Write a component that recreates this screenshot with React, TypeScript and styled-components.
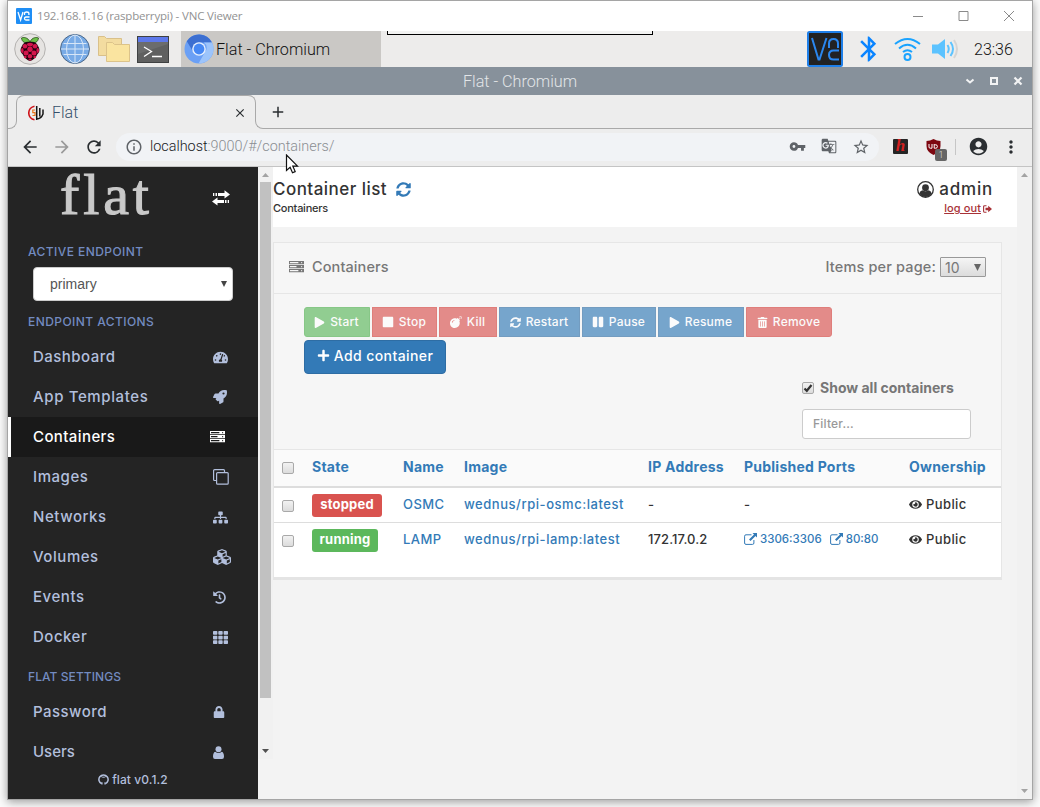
import React from "react";
import styled, { createGlobalStyle, css } from "styled-components";
import {
  FaTachometerAlt, FaRocket, FaSitemap, FaCubes, FaHistory, FaTh, FaLock,
  FaSyncAlt, FaPlay, FaStop, FaBomb, FaPause, FaTrashAlt, FaPlus, FaEye,
} from "react-icons/fa";
import {
  MdArrowBack, MdArrowForward, MdRefresh, MdClose, MdAdd, MdInfoOutline, MdVpnKey,
  MdGTranslate, MdStarBorder, MdAccountCircle, MdMoreVert, MdBluetooth,
} from "react-icons/md";

const sans = `Inter, "Liberation Sans", sans-serif`;
const roboto = `Roboto, "Liberation Sans", sans-serif`;

const GlobalStyle = createGlobalStyle`
  * { box-sizing: border-box; }
  body { margin: 0; background: #fff; overflow: hidden; }
  svg { display: block; flex: none; }
`;

/* ---------- outer window ---------- */

const Stage = styled.div`
  height: 807px;
  padding: 0 7px;
  background: #fbfbfb;
  overflow: hidden;
`;
const Window = styled.div`
  position: relative;
  width: 1026px;
  height: 800px;
  display: flex;
  flex-direction: column;
  border: 1px solid #a5a5a5;
  background: #ededed;
  box-shadow: 0 2px 9px rgba(0, 0, 0, 0.38);
`;
const ViewerBar = styled.div`
  height: 30px;
  flex: none;
  display: flex;
  align-items: center;
  padding-left: 8px;
  background: #fff;
`;
const ViewerTitle = styled.div`
  margin-left: 5px;
  flex: 1;
  font: 11.5px/30px "Open Sans", "Noto Sans", sans-serif;
  letter-spacing: -0.17px;
  color: #929292;
`;
const ViewerButtons = styled.div`
  display: flex;
  gap: 33.5px;
  margin-right: 17px;
`;

/* ---------- desktop panel ---------- */

const Panel = styled.div`
  height: 36px;
  flex: none;
  display: flex;
  align-items: center;
  padding-left: 6px;
  background: #edeceb;
`;
const Launchers = styled.div`
  display: flex;
  align-items: center;
  width: 167px;
`;
const TaskButton = styled.div`
  display: flex;
  align-items: center;
  width: 200px;
  height: 36px;
  padding-left: 3px;
  gap: 2px;
  background: #cac8c5;
  font: 300 16.2px/36px ${roboto};
  color: #111;
  span { padding-top: 1px; }
`;
const HiddenToolbar = styled.div`
  align-self: flex-start;
  width: 266px;
  height: 4px;
  margin-left: 6px;
  border: 1px solid #000;
  border-top: 0;
  background: #f3f3f2;
`;
const Tray = styled.div`
  display: flex;
  align-items: center;
  margin-left: auto;
  padding-right: 18px;
`;
const Clock = styled.div`
  width: 40px;
  margin-left: 15px;
  padding-top: 1px;
  font: 300 16px/35px ${roboto};
  color: #111;
`;
const FrameTitle = styled.div`
  height: 28px;
  flex: none;
  display: grid;
  grid-template-columns: 1fr auto 1fr;
  align-items: center;
  background: #87919b;
  font: 300 16.2px/27px ${roboto};
  color: #e2e5e8;
`;
const FrameButtons = styled.div`
  grid-column: 3;
  justify-self: end;
  display: flex;
  margin-right: 9px;
  gap: 14px;
`;
const FrameText = styled.div`
  grid-column: 2;
`;

/* ---------- browser chrome ---------- */

const TabStrip = styled.div`
  height: 34px;
  flex: none;
  display: flex;
  color: #2a2e31;
`;
const TabLead = styled.div`
  width: 9px;
  border-bottom: 1px solid #a9a9a9;
  border-right: 1px solid #a9a9a9;
  border-bottom-right-radius: 8px;
  margin-top: 8px;
`;
const Tab = styled.div`
  width: 240px;
  display: flex;
  align-items: center;
  padding: 0 9px 0 11px;
  border-top: 1px solid #a9a9a9;
  border-radius: 8px 8px 0 0;
  position: relative;
  margin-left: -1px;
  border-left: 1px solid transparent;
  &::before, &::after {
    content: "";
    position: absolute;
    top: -1px;
    width: 9px;
    height: 26px;
  }
  &::before { left: -1px; border-left: 1px solid #a9a9a9; border-top-left-radius: 8px; }
  &::after { right: 0; border-right: 1px solid #a9a9a9; border-top-right-radius: 8px; }
`;
const TabName = styled.div`
  flex: 1;
  margin-left: 8px;
  font: 300 16px/32px ${roboto};
  color: #35506b;
`;
const TabRest = styled.div`
  flex: 1;
  margin-left: -1px;
  margin-top: 8px;
  padding: 0 0 0 13px;
  border-bottom: 1px solid #a9a9a9;
  border-left: 1px solid #a9a9a9;
  border-bottom-left-radius: 8px;
`;
const Toolbar = styled.div`
  height: 38px;
  flex: none;
  display: flex;
  align-items: center;
  padding: 0 12px 2px;
  border-bottom: 1px solid #c4c4c4;
  color: #2a2e31;
`;
const NavButtons = styled.div`
  display: flex;
  gap: 12px;
  width: 96px;
  flex: none;
`;
const Omnibox = styled.div`
  width: 763px;
  flex: none;
  height: 28px;
  display: flex;
  align-items: center;
  padding: 0 9px;
  border-radius: 14px;
  background: #f1f3f6;
  color: #5f6368;
`;
const Url = styled.div`
  flex: 1;
  margin-left: 7px;
  padding-top: 1px;
  font: 300 14.4px/28px ${roboto};
  color: #8a8e92;
  b { font-weight: 300; color: #17191b; }
`;
const OmniIcons = styled.div`
  display: flex;
  gap: 15px;
`;
const Extensions = styled.div`
  flex: 1;
  display: flex;
  align-items: center;
  padding-left: 14px;
`;
const ExtLetter = styled.div`
  width: 15px;
  height: 15px;
  flex: none;
  border-radius: 1px;
  background: #252525;
  color: #d42020;
  font: italic bold 17px/14px "Liberation Serif", serif;
  text-align: center;
`;
const ShieldBox = styled.div`
  position: relative;
  margin-left: 18px;
`;
const ShieldBadge = styled.span`
  position: absolute;
  left: 9px;
  top: 10px;
  width: 12px;
  height: 12px;
  border-radius: 2px;
  background: #666;
  color: #ddd;
  font: 300 9px/12px ${roboto};
  text-align: center;
`;
const Divider = styled.i`
  width: 1px;
  height: 16px;
  flex: none;
  margin: 0 12px 0 14px;
  background: #c6c6c6;
`;
const Pointer = styled.div`
  position: absolute;
  left: 277px;
  top: 153px;
`;

/* ---------- page ---------- */

const Page = styled.div`
  flex: 1;
  min-height: 0;
  display: flex;
  background: #f3f3f3;
`;
const Sidebar = styled.nav`
  width: 250px;
  display: flex;
  flex-direction: column;
  background: #242424;
  font-family: ${sans};
  font-weight: 500;
  color: #b2bfdc;
`;
const SideHead = styled.div`
  height: 65px;
  flex: none;
  display: flex;
  justify-content: space-between;
  padding: 0 28px 0 52px;
`;
const Logo = styled.div`
  height: 65px;
  font: 58px/56px "Liberation Serif", serif;
  letter-spacing: 3.9px;
  -webkit-text-stroke: 1.1px #c9c9c9;
  color: #c9c9c9;
`;
const SideHeading = styled.div<{ $ls?: number }>`
  height: 35px;
  flex: none;
  padding-left: 20px;
  font-size: 12px;
  line-height: 39px;
  letter-spacing: ${(p) => p.$ls ?? 0.44}px;
  color: #738bc0;
`;
const EndpointSelect = styled.div`
  height: 34px;
  flex: none;
  margin: 0 25px 1px;
  padding: 0 5px 0 16px;
  display: flex;
  align-items: center;
  justify-content: space-between;
  border: 1px solid #ccc;
  border-radius: 4px;
  background: #fff;
  font: 14px/32px "Liberation Sans", sans-serif;
  color: #555;
`;
const MenuItem = styled.div<{ $active?: boolean; $ls: number }>`
  height: 40px;
  flex: none;
  display: grid;
  grid-template-columns: 180px 1fr;
  align-items: center;
  padding-left: ${(p) => (p.$active ? 22 : 25)}px;
  font-size: 15px;
  letter-spacing: ${(p) => p.$ls}px;
  span { padding-bottom: 1px; }
  ${(p) => p.$active && css`
    background: #191919;
    border-left: 3px solid #fff;
    color: #fff;
    svg { margin-left: -3px; }
  `}
`;
const MenuList = styled.div<{ $h: number }>`
  height: ${(p) => p.$h}px;
  flex: none;
  overflow: hidden;
`;
const SideFoot = styled.div`
  flex: 1;
  display: flex;
  align-items: center;
  justify-content: center;
  padding-bottom: 8px;
  gap: 3px;
  font-size: 12px;
  letter-spacing: 0.1px;
`;
const Scroll = styled.div<{ $h: number; $w: number }>`
  width: ${(p) => p.$w}px;
  height: ${(p) => p.$h}px;
  flex: none;
  display: flex;
  flex-direction: column;
  align-items: center;
  justify-content: space-between;
  padding: 6px 0;
  background: #f1f1f1;
`;
const Thumb = styled.div`
  width: 11px;
  height: 516px;
  margin: 5px 0 auto;
  background: #c1c1c1;
`;
const Main = styled.main`
  flex: 1;
  font-family: ${sans};
  font-weight: 500;
  color: #333;
`;
const PageHead = styled.header`
  height: 60px;
  display: flex;
  justify-content: space-between;
  padding: 11px 25px 0 0;
  background: #fff;
`;
const HeadTitle = styled.div`
  display: flex;
  align-items: center;
  gap: 9px;
  height: 22px;
  font-size: 17px;
  letter-spacing: 0.46px;
  svg { color: #337ab7; }
`;
const Crumb = styled.div`
  font-size: 11px;
  line-height: 17px;
  letter-spacing: -0.25px;
`;
const Account = styled.div`
  display: flex;
  flex-direction: column;
  align-items: flex-end;
`;
const UserName = styled(HeadTitle)`
  gap: 5px;
  letter-spacing: 0.8px;
  margin-right: -1px;
  svg { color: #333; }
`;
const LogOut = styled.a`
  display: flex;
  align-items: center;
  gap: 2px;
  font-size: 11px;
  line-height: 17px;
  letter-spacing: 0.1px;
  text-decoration: underline;
  color: #a83237;
`;

const Widget = styled.section`
  width: 729px;
  margin-top: 15px;
  border: 1px solid #e6e6e6;
  border-bottom: 3px solid #e4e4e4;
  background: #fff;
`;
const WidgetHead = styled.div`
  height: 51px;
  display: flex;
  align-items: center;
  padding: 0 15px 2px 15px;
  border-bottom: 1px solid #e6e6e6;
  background: #f6f6f6;
  font-size: 14.5px;
  color: #777;
  > span { padding-bottom: 1px; letter-spacing: 0.15px; }
`;
const WidgetTitle = styled.div`
  flex: 1;
  margin-left: 8px;
  padding-bottom: 1px;
  letter-spacing: 0.1px;
`;
const PageSize = styled.div`
  width: 46px;
  height: 20px;
  margin-left: 4px;
  padding: 0 4px;
  display: flex;
  align-items: center;
  justify-content: space-between;
  border: 1px solid #999;
  border-radius: 1px;
  background: linear-gradient(#f5f5f5, #dcdcdc);
  font-size: 14px;
  font-weight: 400;
`;
const Controls = styled.div`
  height: 156px;
  padding: 13px 30px 0;
  border-bottom: 1px solid #e6e6e6;
  background: #f6f6f6;
`;
const ButtonGroup = styled.div`
  display: flex;
  gap: 2px;
`;
const tones = {
  green: ["#5cb85c", "#4cae4c"],
  red: ["#d9534f", "#d43f3a"],
  blue: ["#337ab7", "#2e6da4"],
};
const ActionButton = styled.button<{ $tone: keyof typeof tones; $w: number }>`
  width: ${(p) => p.$w}px;
  height: 30px;
  padding: 0;
  display: flex;
  align-items: center;
  justify-content: center;
  gap: 5px;
  border: 1px solid ${(p) => tones[p.$tone][1]};
  background: ${(p) => tones[p.$tone][0]};
  opacity: 0.65;
  color: #fff;
  font: 500 12px ${sans};
  letter-spacing: 0.22px;
  span { padding-bottom: 1px; margin-right: 1px; }
  &:first-child { border-radius: 3px 0 0 3px; }
  &:last-child { border-radius: 0 3px 3px 0; }
`;
const AddButton = styled.button`
  width: 142px;
  height: 34px;
  margin-top: 3px;
  padding: 0 0 3px;
  display: flex;
  align-items: center;
  justify-content: center;
  gap: 4px;
  border: 1px solid #2e6da4;
  border-radius: 4px;
  background: #337ab7;
  color: #fff;
  font: 500 14px ${sans};
  letter-spacing: 0.42px;
`;
const FilterArea = styled.div`
  width: 169px;
  margin: 4px 0 0 auto;
`;
const ShowAll = styled.label`
  height: 21px;
  display: flex;
  align-items: center;
  gap: 6px;
  font-size: 14px;
  white-space: nowrap;
  color: #777;
  b { padding-bottom: 2px; font-weight: 700; }
`;
const Check = styled.span`
  width: 12px;
  height: 12px;
  flex: none;
  border: 1px solid #a9a9a9;
  border-radius: 2px;
  background: linear-gradient(#f2f2f2, #dcdcdc);
`;
const ShowAllCheck = styled(Check)`
  margin-bottom: 1px;
`;
const FilterInput = styled.div`
  height: 30px;
  margin-top: 10px;
  padding-left: 10px;
  border: 1px solid #ccc;
  border-radius: 3px;
  background: #fff;
  font-size: 12px;
  line-height: 27px;
  letter-spacing: 0.2px;
  color: #999;
`;
const Cell = styled.span<{ $ls?: number; $link?: boolean }>`
  display: flex;
  align-items: center;
  letter-spacing: ${(p) => p.$ls ?? 0.1}px;
  ${(p) => p.$link && "color: #337ab7;"}
`;
const HeadCell = styled(Cell)`
  letter-spacing: 0.24px;
`;
const Row = styled.div<{ $head?: boolean; $last?: boolean }>`
  display: grid;
  grid-template-columns: 30px 91px 61px 184px 96px 165px 1fr;
  align-items: center;
  height: ${(p) => (p.$head ? 38 : 35)}px;
  padding: ${(p) => (p.$head ? "0 0 3px 8px" : "1px 0 0 8px")};
  background: ${(p) => (p.$head ? "#fafafa" : "#fff")};
  border-bottom: ${(p) => (p.$head ? "2px solid #ddd" : `1px solid ${p.$last ? "#fff" : "#ddd"}`)};
  font-size: 13px;
  white-space: nowrap;
  ${(p) => p.$head ? css`
    font-size: 14px;
    font-weight: 700;
    color: #337ab7;
    ${Check} { margin-top: 3px; }
  ` : css`
    ${Cell} { padding-bottom: 3px; }
    ${Check} { margin-top: 1px; }
  `}
`;
const Ports = styled(Cell)`
  gap: 3px;
  font-size: 11.5px;
  letter-spacing: 0;
  svg:nth-of-type(2) { margin-left: 5px; }
`;
const StateLabel = styled.span<{ $ok?: boolean; $w: number }>`
  width: ${(p) => p.$w}px;
  height: 23px;
  border-radius: 3px;
  background: ${(p) => (p.$ok ? "#5cb85c" : "#d9534f")};
  color: #fff;
  font-weight: 700;
  font-size: 13px;
  letter-spacing: 0.2px;
  line-height: 21px;
  text-align: center;
`;
const TableFoot = styled.div`
  height: 19px;
`;

/* ---------- drawings ---------- */

const VncLogo = () => (
  <svg width="16" height="16" viewBox="0 0 16 16">
    <rect width="16" height="16" rx="1" fill="#1f8ef5" />
    <path d="M2 4l2.600 8L7 4M8.500 7V5.500q0-1.500 2.200-1.500t2.200 1.500V7M13.500 9h-3.500q-1.500 0-1.500 1.500t1.500 1.500h3.500" stroke="#fff" strokeWidth="1.300" fill="none" />
  </svg>
);
const Raspberry = () => (
  <svg width="32" height="32" viewBox="0 0 32 32">
    <circle cx="16" cy="16" r="15.300" fill="#e6e4e2" stroke="#b3b1af" />
    <path d="M16 9c-2-5-7-5-8.500-4C8 9 11 11 16 9zM16 9c2-5 7-5 8.500-4C24 9 21 11 16 9z" fill="#6cc04a" stroke="#274d14" strokeWidth=".8" />
    <path d="M16 9c4-1 7 1 8 4 2 3 2 6-.5 8-1.500 4-5 6.500-7.500 7-2.500-.5-6-3-7.500-7-2.500-2-2.500-5-.5-8 1-3 4-5 8-4z" fill="#250410" />
    <g fill="#d4164c">
      <ellipse cx="16" cy="11.500" rx="3" ry="1.800" /><circle cx="11" cy="13.300" r="2.300" /><circle cx="21" cy="13.300" r="2.300" />
      <circle cx="16" cy="16.300" r="2.700" /><ellipse cx="8.300" cy="17.500" rx="1.300" ry="2.400" /><ellipse cx="23.700" cy="17.500" rx="1.300" ry="2.400" />
      <circle cx="12" cy="20" r="2.500" /><circle cx="20" cy="20" r="2.500" /><circle cx="16" cy="23.300" r="2.200" />
      <circle cx="11.300" cy="24" r="1.300" /><circle cx="20.700" cy="24" r="1.300" /><ellipse cx="16" cy="26.700" rx="1.700" ry=".8" />
    </g>
  </svg>
);
const Spaced = styled.svg<{ $l?: number; $t?: number }>`
  margin-left: ${(p) => p.$l ?? 0}px;
  margin-top: ${(p) => p.$t ?? 0}px;
`;
const Globe = () => (
  <Spaced $l={13} width="32" height="32" viewBox="0 0 32 32">
    <circle cx="16" cy="16" r="14.500" fill="#79abe6" stroke="#4a6788" />
    <g fill="none" stroke="#d7e6f7"><ellipse cx="16" cy="16" rx="8.500" ry="14" /><path d="M16 2v28M2 16h28M4.500 10.500h23M4.500 21.500h23" /></g>
  </Spaced>
);
const Folders = () => (
  <Spaced $l={7} width="32" height="28" viewBox="0 0 32 28">
    <path d="M.5 1.500h6l2 2h15v17h-23z" fill="#f3dca0" stroke="#d9c08a" />
    <path d="M8.500 7.500h6l2 2h15v17h-23z" fill="#fae4a0" stroke="#dcc38a" />
  </Spaced>
);
const Terminal = () => (
  <Spaced $l={7} width="32" height="27" viewBox="0 0 32 27">
    <rect x=".5" y=".5" width="31" height="26" fill="#5f6060" stroke="#3f4142" />
    <rect x="1" y="1" width="30" height="5" fill="#5d78ea" />
    <path d="M1 26V18L31 8v-2H1z" fill="#6b6c6c" /><path d="M7 11l7.500 4.500L7 20.500M15 20.500h10" fill="none" stroke="#fff" strokeWidth="1.300" />
  </Spaced>
);
const Chromium = () => (
  <svg width="30" height="30" viewBox="0 0 30 30">
    <circle cx="15" cy="15" r="14.500" fill="#6ba0f5" />
    <path d="M2.800 7.200A14.500 14.500 0 0 1 28 8.500H15a6.500 6.500 0 0 0-6 9z" fill="#3c6fd1" />
    <path d="M28 8.500A14.500 14.500 0 0 1 14.500 29.500l6.400-11.200a6.500 6.500 0 0 0-1-9.800z" fill="#9cc4fb" />
    <circle cx="15" cy="15" r="6.800" fill="#e6effd" /><circle cx="15" cy="15" r="5.400" fill="#4688f4" />
  </svg>
);
const VncTray = () => (
  <svg width="36" height="36" viewBox="0 0 36 36">
    <rect x="1" y="1" width="34" height="34" rx="1.500" fill="#222" stroke="#1f7fe8" strokeWidth="2" />
    <path d="M5 7l6.500 21.500h1L19.500 7M22 17v-4.500q0-4.500 4.500-4.500t4.500 4.500V17M32 19.500h-5.500q-4.500 0-4.500 4.500t4.500 4.500H32" stroke="#2b87ee" strokeWidth="2" fill="none" />
  </svg>
);
const BluetoothIcon = styled(MdBluetooth)`
  margin: 0 -1px 0 11px;
  color: #0a84ff;
`;
const Wifi = () => (
  <Spaced $l={11} width="27" height="25" viewBox="0 0 27 25" fill="none" stroke="#1aa3ff" strokeWidth="2">
    <path d="M1 7Q13.500-3 26 7M5 11.500Q13.500 4 22 11.500M9 15q4.500-3.500 9 0" /><circle cx="13.500" cy="20" r="3" />
  </Spaced>
);
const Speaker = () => (
  <Spaced $l={11} width="27" height="22" viewBox="0 0 27 22" fill="none" strokeWidth="2">
    <path d="M0 6.500h6L13 1v20l-7-5.500H0z" fill="#5cc3ff" />
    <path d="M15.500 7q2.500 4 0 8M18.500 4q5 7 0 14" stroke="#5cc3ff" /><path d="M22 2q6 9 0 18" stroke="#d6d5d4" />
  </Spaced>
);
const Favicon = () => (
  <svg width="16" height="16" viewBox="0 0 16 16" fill="none">
    <path d="M6.500 1.200A6.900 6.900 0 0 0 6.500 14.800" stroke="#cf1218" strokeWidth="1.600" /><path d="M7 5H4.800v2.700H7v2.800H4.500" stroke="#e8741a" strokeWidth="1.200" />
    <path d="M8.700 1v14M8.700 14q4.500-.3 6.300-5V4.500M11.800 3v8.500" stroke="#151515" strokeWidth="1.500" />
  </svg>
);
const Shield = () => (
  <svg width="15" height="16" viewBox="0 0 15 16">
    <path d="M7.500 0Q11 2 14.500 2v5q0 6-7 9-7-3-7-9V2Q4 2 7.500 0z" fill="#7d0710" />
    <path d="M3 5v3q0 1.200 1.300 1.200H6V5M8.200 5v4.200h1.600q1.600-.1 1.600-1.700T9.800 5.800H8.500" stroke="#fff" fill="none" />
  </svg>
);
const ServerIcon = ({ w = 16 }: { w?: number }) => (
  <svg width={w} height={(w * 12) / 16} viewBox="0 0 16 12" fill="currentColor">
    <path fillRule="evenodd" d="M0 0h16v3.400H0zM1 1v1.300h9V1zm12 0v1.300h1V1zM0 4.300h16v3.400H0zM1 5.300v1.300h7V5.300zm12 0v1.300h1V5.300zM0 8.600h16V12H0zM1 9.700V11h9V9.700zm12 0V11h1V9.700z" />
  </svg>
);
const CloneIcon = () => (
  <svg width="16" height="16" viewBox="0 0 16 16" fill="none" stroke="currentColor" strokeWidth="1.200">
    <rect x="3.600" y="3.600" width="11.600" height="11.600" rx="1" /><path d="M3.500 11.500H1.600a1 1 0 0 1-1-1V1.600a1 1 0 0 1 1-1h8.900a1 1 0 0 1 1 1v1.900" />
  </svg>
);
const PersonIcon = () => (
  <svg width="11" height="13" viewBox="0 0 11 13" fill="currentColor">
    <circle cx="5.500" cy="3.200" r="3" /><path d="M2.200 5.700q3.300 2.600 6.600 0Q11 6.500 11 10.700q0 2.300-2 2.300H2q-2 0-2-2.300 0-4.200 2.200-5z" />
  </svg>
);
const GithubMark = () => (
  <svg width="11" height="11" viewBox="0 0 11 11" fill="none" stroke="currentColor">
    <path d="M3.800 9.800A4.600 4.600 0 1 1 7.200 9.800" strokeWidth="1.500" />
    <path d="M4.100 10.500V8.300M6.900 10.500V8.300M4 9.200q-1.200.2-1.900-1M3.300 2.600l1.300.6h1.800l1.300-.6" strokeWidth="1" />
  </svg>
);
const UserRing = () => (
  <svg width="17" height="17" viewBox="0 0 17 17">
    <circle cx="8.500" cy="8.500" r="7.800" fill="none" stroke="currentColor" strokeWidth="1.300" />
    <circle cx="8.500" cy="6.700" r="3.400" fill="currentColor" /><path d="M2.300 12.500Q3 9.600 5.500 9.200q3 2 6 0 2.500.4 3.200 3.300Q12.500 16 8.500 16t-6.200-3.500z" fill="currentColor" />
  </svg>
);
const ExitIcon = () => (
  <svg width="9" height="8" viewBox="0 0 9 8">
    <path d="M3.500.7H1.700Q.6.700.6 1.800v4.400q0 1.100 1.100 1.100h1.800" fill="none" stroke="currentColor" strokeWidth="1.100" /><path d="M2.500 2.700h2.700V.7L9 4 5.200 7.300v-2H2.500z" fill="currentColor" />
  </svg>
);
const ExternalIcon = () => (
  <svg width="13" height="12" viewBox="0 0 13 12">
    <path d="M7.500 1.800H2Q.6 1.800.6 3.200V10q0 1.400 1.400 1.400h6.500q1.400 0 1.400-1.400V7" fill="none" stroke="currentColor" strokeWidth="1" />
    <path d="M8.500 0H13v4.500l-1.500-1.500-5 5L5 6.500l5-5z" fill="currentColor" />
  </svg>
);
const SwapIcon = () => (
  <Spaced $t={23} width="18" height="16" viewBox="0 0 18 16" fill="#fff">
    <path d="M6 3h6.500V.3L18 4.500 12.500 8.500V6H6zM1 3h1.300v3H1zm2.500 0H5v3H3.500zM12 10H5.500V7.500L0 11.500l5.500 4V13H12zM13 10h1.500v3H13zm2.700 0H17v3h-1.300z" />
  </Spaced>
);
const Caret = ({ w = 7, h = 7, color = "#444", up }: { w?: number; h?: number; color?: string; up?: boolean }) => (
  <svg width={w} height={h} viewBox="0 0 8 8" preserveAspectRatio="none"><path d={up ? "M0 8h8L4 0z" : "M0 0h8L4 8z"} fill={color} /></svg>
);
const EyeIcon = styled(FaEye)`
  margin-right: 4px;
`;
const MoreIcon = styled(MdMoreVert)`
  margin-left: 12px;
`;

/* ---------- data ---------- */

type Item = { name: string; icon: React.ReactNode; ls: number; active?: boolean };
const endpointMenu: Item[] = [
  { name: "Dashboard", icon: <FaTachometerAlt size={15} />, ls: 0.48 },
  { name: "App Templates", icon: <FaRocket size={14} />, ls: 0.62 },
  { name: "Containers", icon: <ServerIcon w={15} />, ls: 0.4, active: true },
  { name: "Images", icon: <CloneIcon />, ls: 0.55 },
  { name: "Networks", icon: <FaSitemap size={15} />, ls: 0.55 },
  { name: "Volumes", icon: <FaCubes size={18} />, ls: 0.55 },
  { name: "Events", icon: <FaHistory size={13} />, ls: 0.55 },
  { name: "Docker", icon: <FaTh size={15} />, ls: 0.5 },
];
const settingsMenu: Item[] = [
  { name: "Password", icon: <FaLock size={12} />, ls: 0.45 },
  { name: "Users", icon: <PersonIcon />, ls: 0 },
];
const actions: { name: string; tone: keyof typeof tones; w: number; icon: React.ReactNode }[] = [
  { name: "Start", tone: "green", w: 66, icon: <FaPlay size={11} /> },
  { name: "Stop", tone: "red", w: 65, icon: <FaStop size={12} /> },
  { name: "Kill", tone: "red", w: 58, icon: <FaBomb size={12} /> },
  { name: "Restart", tone: "blue", w: 81, icon: <FaSyncAlt size={11} /> },
  { name: "Pause", tone: "blue", w: 74, icon: <FaPause size={12} /> },
  { name: "Resume", tone: "blue", w: 86, icon: <FaPlay size={11} /> },
  { name: "Remove", tone: "red", w: 86, icon: <FaTrashAlt size={11} /> },
];
const rows = [
  { state: "stopped", w: 70, name: "OSMC", image: "wednus/rpi-osmc:latest", ip: "-", ports: [] as string[] },
  { state: "running", w: 66, name: "LAMP", image: "wednus/rpi-lamp:latest", ip: "172.17.0.2", ports: ["3306:3306", "80:80"] },
];
const columns = ["State", "Name", "Image", "IP Address", "Published Ports", "Ownership"];

const Menu = ({ items }: { items: Item[] }) => (
  <>
    {items.map((i) => (
      <MenuItem key={i.name} $active={i.active} $ls={i.ls}>
        <span>{i.name}</span>
        {i.icon}
      </MenuItem>
    ))}
  </>
);

export default function App() {
  return (
    <Stage>
      <GlobalStyle />
      <Window>
        <ViewerBar>
          <VncLogo />
          <ViewerTitle>192.168.1.16 (raspberrypi) - VNC Viewer</ViewerTitle>
          <ViewerButtons>
            <svg width="12" height="12" stroke="#8a8a8a"><path d="M1 6.500h10" /></svg>
            <svg width="12" height="12" stroke="#8a8a8a" fill="none"><path d="M1 1.500h9v9H1z" /></svg>
            <svg width="12" height="12" stroke="#8a8a8a"><path d="M1 1l10 10M11 1L1 11" /></svg>
          </ViewerButtons>
        </ViewerBar>

        <Panel>
          <Launchers><Raspberry /><Globe /><Folders /><Terminal /></Launchers>
          <TaskButton><Chromium /><span>Flat - Chromium</span></TaskButton>
          <HiddenToolbar />
          <Tray>
            <VncTray />
            <BluetoothIcon size={30} />
            <Wifi />
            <Speaker />
            <Clock>23:36</Clock>
          </Tray>
        </Panel>

        <FrameTitle>
          <FrameText>Flat - Chromium</FrameText>
          <FrameButtons>
            <svg width="10" height="10" fill="none" stroke="#f2f3f4" strokeWidth="2"><path d="M1.500 3.500L5 6.500l3.500-3" /></svg>
            <svg width="10" height="10" fill="none" stroke="#f2f3f4" strokeWidth="2"><path d="M2 2h6v6H2z" /></svg>
            <svg width="10" height="10" fill="none" stroke="#f2f3f4" strokeWidth="2.200"><path d="M1.500 1.500l7 7M8.500 1.500l-7 7" /></svg>
          </FrameButtons>
        </FrameTitle>

        <TabStrip>
          <TabLead />
          <Tab>
            <Favicon />
            <TabName>Flat</TabName>
            <MdClose size={14} />
          </Tab>
          <TabRest><MdAdd size={18} /></TabRest>
        </TabStrip>
        <Toolbar>
          <NavButtons>
            <MdArrowBack size={20} /><MdArrowForward size={20} color="#999" /><MdRefresh size={20} />
          </NavButtons>
          <Omnibox>
            <MdInfoOutline size={18} />
            <Url><b>localhost</b>:9000/#/containers/</Url>
            <OmniIcons>
              <MdVpnKey size={17} /><MdGTranslate size={16} /><MdStarBorder size={18} />
            </OmniIcons>
          </Omnibox>
          <Extensions>
            <ExtLetter>h</ExtLetter>
            <ShieldBox><Shield /><ShieldBadge>1</ShieldBadge></ShieldBox>
            <Divider />
            <MdAccountCircle size={21} />
            <MoreIcon size={20} />
          </Extensions>
        </Toolbar>

        <Page>
          <Sidebar>
            <SideHead><Logo>flat</Logo><SwapIcon /></SideHead>
            <SideHeading>ACTIVE ENDPOINT</SideHeading>
            <EndpointSelect>primary<Caret w={6} h={6} /></EndpointSelect>
            <SideHeading>ENDPOINT ACTIONS</SideHeading>
            <MenuList $h={320}><Menu items={endpointMenu} /></MenuList>
            <SideHeading $ls={0.08}>FLAT SETTINGS</SideHeading>
            <MenuList $h={75}><Menu items={settingsMenu} /></MenuList>
            <SideFoot><GithubMark />flat v0.1.2</SideFoot>
          </Sidebar>
          <Scroll $w={15} $h={592}>
            <Caret up w={7} h={4} color="#a3a3a3" />
            <Thumb />
            <Caret w={7} h={4} color="#505050" />
          </Scroll>
          <Main>
            <PageHead>
              <div>
                <HeadTitle>Container list<FaSyncAlt size={15} /></HeadTitle>
                <Crumb>Containers</Crumb>
              </div>
              <Account>
                <UserName><UserRing />admin</UserName>
                <LogOut>log out<ExitIcon /></LogOut>
              </Account>
            </PageHead>
            <Widget>
              <WidgetHead>
                <ServerIcon w={15} />
                <WidgetTitle>Containers</WidgetTitle>
                <span>Items per page:</span>
                <PageSize>10<Caret w={7} h={7} color="#666" /></PageSize>
              </WidgetHead>
              <Controls>
                <ButtonGroup>
                  {actions.map((a) => (
                    <ActionButton key={a.name} $tone={a.tone} $w={a.w}>{a.icon}<span>{a.name}</span></ActionButton>
                  ))}
                </ButtonGroup>
                <AddButton><FaPlus size={13} />Add container</AddButton>
                <FilterArea>
                  <ShowAll>
                    <ShowAllCheck>
                      <svg width="10" height="10" fill="none" stroke="#333" strokeWidth="2.200"><path d="M1.500 5.500l2.300 2.300L8.500 2" /></svg>
                    </ShowAllCheck>
                    <b>Show all containers</b>
                  </ShowAll>
                  <FilterInput>Filter...</FilterInput>
                </FilterArea>
              </Controls>
              <Row $head>
                <Check />
                {columns.map((c) => <HeadCell key={c}>{c}</HeadCell>)}
              </Row>
              {rows.map((r, i) => (
                <Row key={r.name} $last={i === 1}>
                  <Check />
                  <StateLabel $w={r.w} $ok={r.state === "running"}>{r.state}</StateLabel>
                  <Cell $link $ls={0.45}>{r.name}</Cell>
                  <Cell $link $ls={0.54}>{r.image}</Cell>
                  <Cell>{r.ip}</Cell>
                  {r.ports.length ? (
                    <Ports $link>
                      {r.ports.map((p) => <React.Fragment key={p}><ExternalIcon />{p}</React.Fragment>)}
                    </Ports>
                  ) : <Cell>-</Cell>}
                  <Cell $ls={0.4}><EyeIcon size={13} />Public</Cell>
                </Row>
              ))}
              <TableFoot />
            </Widget>
          </Main>
          <Scroll $w={15} $h={632}>
            <Caret up w={7} h={4} color="#a3a3a3" />
            <Caret w={7} h={4} color="#a3a3a3" />
          </Scroll>
        </Page>
        <Pointer>
          <svg width="14" height="20" viewBox="0 0 14 20"><path d="M1.500 1v15.500l3.600-3.300 2.400 5.600 2.700-1.200-2.400-5.500h4.700z" fill="#fff" stroke="#111" strokeWidth="1.200" /></svg>
        </Pointer>
      </Window>
    </Stage>
  );
}
